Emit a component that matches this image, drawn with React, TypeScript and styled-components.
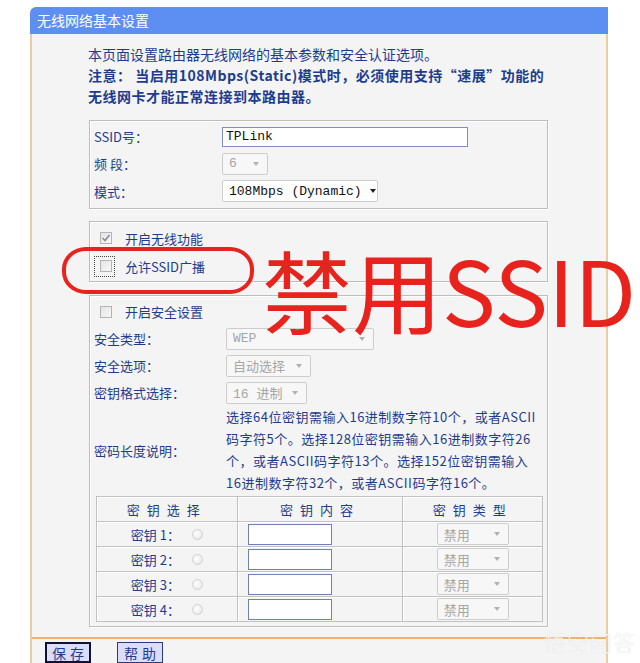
import React from "react";
import styled, { createGlobalStyle } from "styled-components";

const blue = "#1d3c8f";
const grayText = "#a6a6a6";

const GlobalStyle = createGlobalStyle`
  html, body { margin: 0; padding: 0; background: #ffffff; }
  body { font-family: "Noto Sans CJK SC", "Noto Sans", sans-serif; overflow: hidden; }
`;

const Page = styled.div`
  position: relative;
  width: 640px;
  height: 663px;
  overflow: hidden;
  padding: 7px 0 0 30px;
  box-sizing: border-box;
`;

const Panel = styled.div`
  width: 578px;
`;

const Header = styled.div`
  height: 27px;
  line-height: 27px;
  background: #5d8ff3;
  border-top-left-radius: 6px;
  color: #ffffff;
  font-size: 14px;
  padding-left: 7px;
`;

const Body = styled.div`
  background: #f4f4f4;
  border-left: 2px solid #e8cfa3;
  border-right: 2px solid #e8cfa3;
  height: 640px;
`;

const Intro = styled.div`
  padding: 10px 0 0 56px;
  font-size: 14px;
  line-height: 21px;
  color: ${blue};
  white-space: nowrap;
`;

const Strong = styled.div`
  font-weight: bold;
  letter-spacing: 0.5px;
`;

const Box = styled.div<{ $top: number; $bottom: number }>`
  margin: ${({ $top }) => $top}px 0 0 57px;
  width: 459px;
  box-sizing: border-box;
  border: 1px solid #bdbdbd;
  box-shadow: inset 1px 1px 0 #ffffff, 1px 1px 0 #ffffff;
  padding: 2px 4px ${({ $bottom }) => $bottom}px 4px;
`;

const Row = styled.div<{ $h: number }>`
  display: flex;
  align-items: center;
  height: ${({ $h }) => $h}px;
  font-size: 13px;
  color: ${blue};
`;

const Label = styled.div<{ $w: number }>`
  width: ${({ $w }) => $w}px;
  flex-shrink: 0;
  white-space: nowrap;
`;

const TextInput = styled.div<{ $w: number }>`
  width: ${({ $w }) => $w}px;
  height: 20px;
  box-sizing: border-box;
  background: #ffffff;
  border: 1px solid #7d8fc0;
  font-family: "Liberation Mono", "Noto Sans CJK SC", monospace;
  font-size: 13px;
  line-height: 18px;
  color: #111111;
  padding-left: 3px;
`;

const Select = styled.div<{ $w: number; $disabled?: boolean }>`
  width: ${({ $w }) => $w}px;
  height: 22px;
  box-sizing: border-box;
  display: flex;
  align-items: center;
  justify-content: space-between;
  padding: 0 8px 0 6px;
  background: ${({ $disabled }) => ($disabled ? "#f7f7f7" : "#ffffff")};
  border: 1px solid #cdcdcd;
  border-radius: 2px;
  font-family: "Liberation Mono", "Noto Sans CJK SC", monospace;
  font-size: 13px;
  color: ${({ $disabled }) => ($disabled ? grayText : "#111111")};
  white-space: nowrap;
`;

const Arrow = styled.span<{ $disabled?: boolean }>`
  width: 0;
  height: 0;
  border-left: 3px solid transparent;
  border-right: 3px solid transparent;
  border-top: 4px solid ${({ $disabled }) => ($disabled ? "#b0b0b0" : "#222222")};
  margin-left: 8px;
`;

const CheckWrap = styled.span<{ $focus?: boolean }>`
  display: inline-flex;
  align-items: center;
  justify-content: center;
  width: 21px;
  height: 21px;
  box-sizing: border-box;
  margin-left: 0;
  padding-left: 3px;
  border: 1px dotted ${({ $focus }) => ($focus ? "#444444" : "transparent")};
`;

const CheckBox = styled.span`
  width: 12px;
  height: 12px;
  box-sizing: border-box;
  border: 1px solid #b4b4b4;
  background: linear-gradient(135deg, #e4e4e4, #f8f8f8);
  display: inline-flex;
  align-items: center;
  justify-content: center;
`;

const CheckLabel = styled.span`
  margin-left: 10px;
`;

const Description = styled.div`
  display: flex;
  align-items: center;
  font-size: 13px;
  color: ${blue};
`;

const DescText = styled.div`
  line-height: 22px;
  white-space: nowrap;
  letter-spacing: 0.5px;
`;

const KeyTable = styled.table`
  margin: 2px 0 0 2px;
  width: 447px;
  border-collapse: collapse;
  border: 1px solid #a8a8a8;
  font-size: 13px;
  color: ${blue};
`;

const Th = styled.th<{ $w: number }>`
  width: ${({ $w }) => $w}px;
  height: 24px;
  padding: 0;
  font-weight: normal;
  letter-spacing: 7px;
  border: 1px solid #c2c2c2;
  box-shadow: inset 1px 1px 0 #ffffff;
`;

const Td = styled.td<{ $align?: string }>`
  height: 24px;
  padding: 0;
  text-align: ${({ $align }) => $align || "center"};
  border: 1px solid #c2c2c2;
  box-shadow: inset 1px 1px 0 #ffffff;
`;

const KeyCell = styled.div`
  display: flex;
  align-items: center;
  justify-content: center;
  gap: 12px;
  white-space: nowrap;
`;

const Radio = styled.span`
  width: 11px;
  height: 11px;
  border-radius: 50%;
  border: 1px solid #d2d2d2;
  background: radial-gradient(circle at 40% 40%, #ffffff, #e2e2e2);
  box-sizing: border-box;
`;

const KeyInput = styled.div`
  margin-left: 10px;
  width: 84px;
  height: 21px;
  box-sizing: border-box;
  border: 1px solid #6f7fb8;
  background: #ffffff;
`;

const SelectCell = styled.div`
  display: flex;
  justify-content: center;
`;

const Divider = styled.div`
  margin-top: 10px;
  height: 2px;
  background: #f0b271;
`;

const Buttons = styled.div`
  display: flex;
  gap: 26px;
  padding: 3px 0 0 13px;
`;

const Button = styled.div<{ $focus?: boolean }>`
  width: 46px;
  height: 21px;
  box-sizing: border-box;
  display: flex;
  align-items: center;
  justify-content: center;
  background: #dcdcfc;
  border: ${({ $focus }) => ($focus ? "2px solid #111133" : "1px solid #2a3a7a")};
  color: ${blue};
  font-size: 14px;
  line-height: 16px;
  letter-spacing: 4px;
  padding-left: 4px;
`;

const RedRing = styled.div`
  position: absolute;
  left: 62px;
  top: 247px;
  width: 192px;
  height: 47px;
  box-sizing: border-box;
  border: 4px solid #e8231d;
  border-radius: 24px / 22px;
`;

const RedLabel = styled.div`
  position: absolute;
  left: 262px;
  top: 238px;
  font-size: 90px;
  line-height: 100px;
  color: #e8231d;
  white-space: nowrap;
  font-family: "Noto Sans CJK SC", "Noto Sans", sans-serif;
`;

const Watermark = styled.div`
  position: absolute;
  right: 4px;
  bottom: 6px;
  font-size: 22px;
  color: rgba(255, 255, 255, 0.75);
  text-shadow: 0 0 1px rgba(0, 0, 0, 0.12);
  letter-spacing: 1px;
`;

const Tick = () => (
  <svg width="10" height="10" viewBox="0 0 10 10">
    <path d="M1.5 5 L4 7.5 L8.5 2" fill="none" stroke="#8a8a9a" strokeWidth="1.6" />
  </svg>
);

const keys = [1, 2, 3, 4];

export default function App() {
  return (
    <Page>
      <GlobalStyle />
      <Panel>
        <Header>无线网络基本设置</Header>
        <Body>
          <Intro>
            <div>本页面设置路由器无线网络的基本参数和安全认证选项。</div>
            <Strong>注意： 当启用108Mbps(Static)模式时，必须使用支持“速展”功能的</Strong>
            <Strong>无线网卡才能正常连接到本路由器。</Strong>
          </Intro>

          <Box $top={13} $bottom={3}>
            <Row $h={27}>
              <Label $w={128}>SSID号：</Label>
              <TextInput $w={246}>TPLink</TextInput>
            </Row>
            <Row $h={27}>
              <Label $w={128}>频 段：</Label>
              <Select $w={46} $disabled>
                6<Arrow $disabled />
              </Select>
            </Row>
            <Row $h={28}>
              <Label $w={128}>模式：</Label>
              <Select $w={156}>
                108Mbps (Dynamic)<Arrow />
              </Select>
            </Row>
          </Box>

          <Box $top={12} $bottom={1}>
            <Row $h={28}>
              <CheckWrap>
                <CheckBox>
                  <Tick />
                </CheckBox>
              </CheckWrap>
              <CheckLabel>开启无线功能</CheckLabel>
            </Row>
            <Row $h={28}>
              <CheckWrap $focus>
                <CheckBox />
              </CheckWrap>
              <CheckLabel>允许SSID广播</CheckLabel>
            </Row>
          </Box>

          <Box $top={13} $bottom={4}>
            <Row $h={27}>
              <CheckWrap>
                <CheckBox />
              </CheckWrap>
              <CheckLabel>开启安全设置</CheckLabel>
            </Row>
            <Row $h={27}>
              <Label $w={132}>安全类型：</Label>
              <Select $w={148} $disabled>
                WEP<Arrow $disabled />
              </Select>
            </Row>
            <Row $h={27}>
              <Label $w={132}>安全选项：</Label>
              <Select $w={85} $disabled>
                自动选择<Arrow $disabled />
              </Select>
            </Row>
            <Row $h={27}>
              <Label $w={132}>密钥格式选择：</Label>
              <Select $w={81} $disabled>
                16 进制<Arrow $disabled />
              </Select>
            </Row>
            <Description>
              <Label $w={132}>密码长度说明：</Label>
              <DescText>
                <div>选择64位密钥需输入16进制数字符10个，或者ASCII</div>
                <div>码字符5个。选择128位密钥需输入16进制数字符26</div>
                <div>个，或者ASCII码字符13个。选择152位密钥需输入</div>
                <div>16进制数字符32个，或者ASCII码字符16个。</div>
              </DescText>
            </Description>
            <KeyTable>
              <thead>
                <tr>
                  <Th $w={141}>密钥选择</Th>
                  <Th $w={166}>密钥内容</Th>
                  <Th $w={140}>密钥类型</Th>
                </tr>
              </thead>
              <tbody>
                {keys.map((k) => (
                  <tr key={k}>
                    <Td>
                      <KeyCell>
                        <span>密钥 {k}：</span>
                        <Radio />
                      </KeyCell>
                    </Td>
                    <Td $align="left">
                      <KeyInput />
                    </Td>
                    <Td>
                      <SelectCell>
                        <Select $w={72} $disabled>
                          禁用<Arrow $disabled />
                        </Select>
                      </SelectCell>
                    </Td>
                  </tr>
                ))}
              </tbody>
            </KeyTable>
          </Box>

          <Divider />
          <Buttons>
            <Button $focus>保存</Button>
            <Button>帮助</Button>
          </Buttons>
        </Body>
      </Panel>

      <RedRing />
      <RedLabel>禁用SSID</RedLabel>
      <Watermark>悟空问答</Watermark>
    </Page>
  );
}
